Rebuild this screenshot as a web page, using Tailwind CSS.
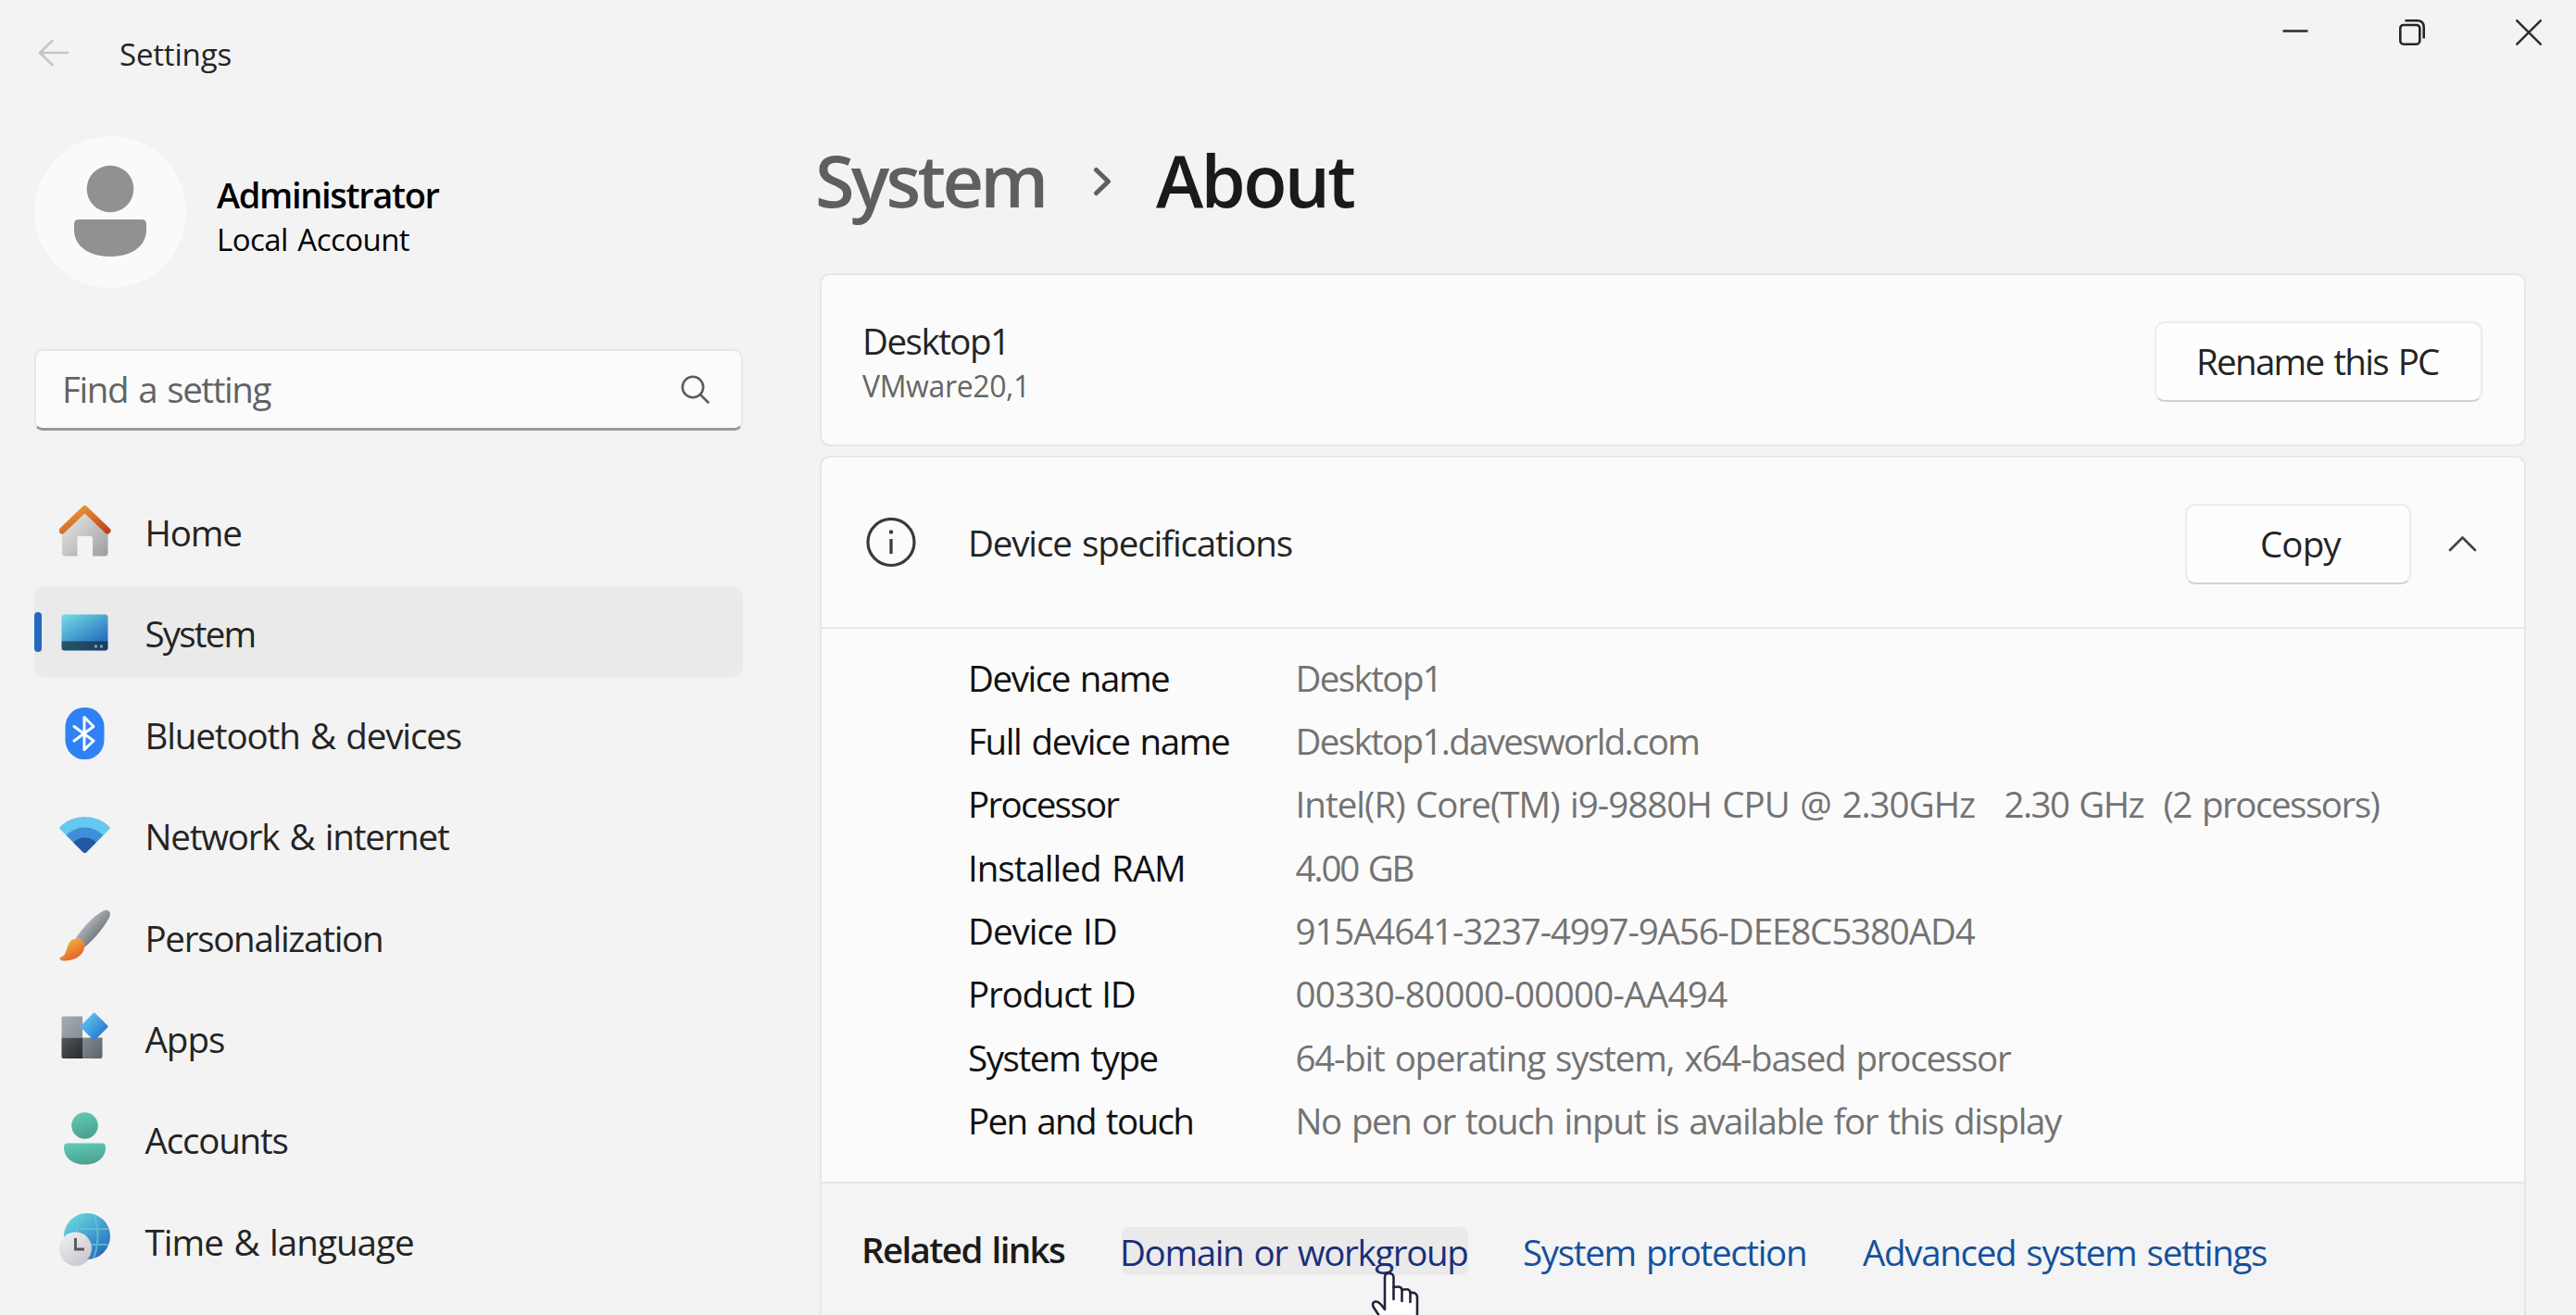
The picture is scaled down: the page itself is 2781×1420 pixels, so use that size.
<!DOCTYPE html>
<html lang="en">
<head>
<meta charset="utf-8">
<title>Settings</title>
<script src="https://cdn.jsdelivr.net/npm/@tailwindcss/browser@4"></script>
</head>
<body class="w-[2781px] h-[1420px] overflow-hidden flex bg-[#f3f3f3] text-[38.5px] text-[#242424] whitespace-nowrap [word-spacing:2.5px] font-['Open_Sans','Noto_Sans',sans-serif]">

<!-- Sidebar -->
<aside class="w-[885px] shrink-0 pl-[37px] pr-[83px] flex flex-col">
  <header class="h-[113px] flex items-center">
    <svg class="w-[34px] h-[30px] ml-[4px]" viewBox="0 0 34 30" fill="none" stroke="#c6c6c6" stroke-width="2.6" stroke-linecap="round" stroke-linejoin="round"><path d="M15.500 2 2 15 15.500 28M2.500 15H32"/></svg>
    <span class="ml-[54px] pt-[5px] text-[33px] tracking-[-0.18px]">Settings</span>
  </header>

  <div class="mt-[33px] h-[166px] flex items-center">
    <svg class="w-[164px] h-[164px]" viewBox="0 1 164 164"><circle cx="82" cy="83" r="82" fill="#fafafa"/><circle cx="82" cy="58" r="25.300" fill="#919191"/><path d="M48 91H116Q121 91 121 96V102C121 120 105 131 82 131S43 120 43 102V96Q43 91 48 91Z" fill="#919191"/></svg>
    <div class="ml-[33px] pt-[11px] text-black">
      <div class="text-[38px] leading-[48px] font-semibold tracking-[-1.34px]">Administrator</div>
      <div class="text-[33px] leading-[49px] tracking-[-0.55px]">Local Account</div>
    </div>
  </div>

  <div class="mt-[65px] h-[88px] shrink-0 rounded-[9px] border-2 border-[#e8e8e8] border-b-[3px] border-b-[#989898] bg-[#fbfbfb] flex items-center justify-between pl-[28px] pr-[33px] text-[#636363]">
    <span class="pt-[1px] tracking-[-1.42px]">Find a setting</span>
    <svg class="w-[32px] h-[32px]" viewBox="0 0 32 32" fill="none" stroke="#5c5c5c" stroke-width="2.6" stroke-linecap="round"><circle cx="13" cy="13" r="11.200"/><path d="M21 21 29.500 29.500"/></svg>
  </div>

  <nav class="mt-[59px] flex flex-col gap-[11.35px]">
    <a class="h-[98px] shrink-0 flex items-center pl-[27px]">
      <svg class="w-[56px] h-[56px]" viewBox="0 0 56 56"><defs><linearGradient id="hb" x1="0" y1="0" x2="1" y2="1"><stop offset=".2" stop-color="#dedede"/><stop offset="1" stop-color="#9d9d9d"/></linearGradient><linearGradient id="hr" x1="0" y1="0" x2="1" y2="1"><stop stop-color="#eda23a"/><stop offset="1" stop-color="#c4421c"/></linearGradient></defs><path d="M3 25 28 6 52.500 25V52Q52.500 55.500 49 55.500H36V36Q36 34 34 34H21Q19.500 34 19.500 36V55.500H6.500Q3 55.500 3 52Z" fill="url(#hb)"/><path d="M3 28 27.500 4.500 52 28" fill="none" stroke="url(#hr)" stroke-width="7" stroke-linecap="round" stroke-linejoin="round"/></svg>
      <span class="ml-[36.5px] pt-[6px] tracking-[-1.16px]">Home</span>
    </a>
    <a class="relative h-[98px] shrink-0 flex items-center pl-[27px] rounded-[11px] bg-[#eaeaea]">
      <span class="absolute left-0 top-[28px] w-[8px] h-[43px] rounded-full bg-[#2468bd]"></span>
      <svg class="w-[56px] h-[56px]" viewBox="0 0 56 56"><defs><linearGradient id="sy" x1="0" y1="0" x2="1" y2="1"><stop stop-color="#75e2e6"/><stop offset="1" stop-color="#2266bd"/></linearGradient><linearGradient id="sb" x1="0" y1="0" x2="1" y2="0"><stop stop-color="#25576b"/><stop offset="1" stop-color="#163a63"/></linearGradient><clipPath id="sc"><rect x="2.500" y="9.500" width="50" height="39" rx="3"/></clipPath></defs><g clip-path="url(#sc)"><path d="M2 9H53V39H2Z" fill="url(#sy)"/><path d="M2 38.500H53V49H2Z" fill="url(#sb)"/></g><path d="M38 42.500h3v3h-3zM44 42.500h3v3h-3z" fill="#7fa0b8"/></svg>
      <span class="ml-[36.5px] pt-[6px] tracking-[-1.82px]">System</span>
    </a>
    <a class="h-[98px] shrink-0 flex items-center pl-[27px]">
      <svg class="w-[56px] h-[56px]" viewBox="0 0 56 56"><rect x="6.500" y="0" width="42" height="56" rx="20" ry="21" fill="#2f82f5"/><path d="M16 20.500 37 36 27 45.500V10.500L37 20.500 16 36" fill="none" stroke="#fff" stroke-width="3" stroke-linejoin="round" stroke-linecap="round"/></svg>
      <span class="ml-[36.5px] pt-[6px] tracking-[-1.12px]">Bluetooth &amp; devices</span>
    </a>
    <a class="h-[98px] shrink-0 flex items-center pl-[27px]">
      <svg class="w-[56px] h-[56px]" viewBox="0 0 56 56"><defs><clipPath id="wf"><path d="M1.500 19.500Q-.5 21 1.500 23L25.500 47Q27.500 49 29.500 47L53.500 23Q55.500 21 53.500 19.500V5H1.500Z"/></clipPath></defs><g clip-path="url(#wf)"><circle cx="27.500" cy="48.500" r="39.500" fill="#66c7ef"/><circle cx="27.500" cy="48.500" r="28" fill="#3f8fd8"/><circle cx="27.500" cy="48.500" r="17" fill="#2458a3"/></g></svg>
      <span class="ml-[36.5px] pt-[6px] tracking-[-1.21px]">Network &amp; internet</span>
    </a>
    <a class="h-[98px] shrink-0 flex items-center pl-[27px]">
      <svg class="w-[56px] h-[56px]" viewBox="0 0 56 56"><defs><linearGradient id="ph" x1=".3" y1=".3" x2=".7" y2=".7"><stop stop-color="#b3b8be"/><stop offset="1" stop-color="#6c737b"/></linearGradient><linearGradient id="pb" x1=".2" y1="0" x2=".8" y2="1"><stop stop-color="#f9bd3c"/><stop offset="1" stop-color="#de5527"/></linearGradient></defs><path d="M18 31C25 20 36 8 47.500 1.500Q51 0 53.500 2T54 8.500C48 20 37 33 27 41Z" fill="url(#ph)"/><path d="M18 31.500C24 30.500 28.500 36 27 42C25 51 15 56 4 55.500Q0 54.500 .5 52C6 51 7 46 9 40C10.500 35 13 32.500 18 31.500Z" fill="url(#pb)"/></svg>
      <span class="ml-[36.5px] pt-[6px] tracking-[-1.29px]">Personalization</span>
    </a>
    <a class="h-[98px] shrink-0 flex items-center pl-[27px]">
      <svg class="w-[56px] h-[56px]" viewBox="0 0 56 56"><defs><linearGradient id="a1" x1="0" y1="0" x2="1" y2="1"><stop stop-color="#a6adb4"/><stop offset="1" stop-color="#868d95"/></linearGradient><linearGradient id="a2" x1="0" y1="0" x2="1" y2="1"><stop stop-color="#51585e"/><stop offset="1" stop-color="#272b2e"/></linearGradient><linearGradient id="a3" x1="0" y1="0" x2="1" y2="1"><stop stop-color="#848b92"/><stop offset="1" stop-color="#5c6369"/></linearGradient><linearGradient id="a4" x1="0" y1="0" x2="1" y2="1"><stop offset=".1" stop-color="#64c8f2"/><stop offset=".9" stop-color="#2270cf"/></linearGradient></defs><path d="M4.500 5.500H25V28.500H2.500V7.500Q2.500 5.500 4.500 5.500Z" fill="url(#a1)"/><path d="M2.500 28.500H25V51H4.500Q2.500 51 2.500 49Z" fill="url(#a2)"/><path d="M25 28.500H46.500V49Q46.500 51 44.500 51H25Z" fill="url(#a3)"/><path d="M36.500 2.200Q37.700 1 39 2.200L52 15.200Q53.200 16.500 52 17.800L39 30.800Q37.700 32 36.500 30.800L23.500 17.800Q22.300 16.500 23.500 15.200Z" fill="url(#a4)"/></svg>
      <span class="ml-[36.5px] pt-[6px] tracking-[-0.98px]">Apps</span>
    </a>
    <a class="h-[98px] shrink-0 flex items-center pl-[27px]">
      <svg class="w-[56px] h-[56px] overflow-visible" viewBox="0 0 56 56"><defs><linearGradient id="ac" x1=".3" y1="0" x2=".6" y2="1"><stop stop-color="#5fc9b4"/><stop offset="1" stop-color="#4b9f8f"/></linearGradient></defs><circle cx="27.500" cy="14.500" r="14.300" fill="url(#ac)"/><path d="M9 33.500H46Q50 33.500 50 38C50 49 41 56.500 27.500 56.500S5 49 5 38Q5 33.500 9 33.500Z" fill="url(#ac)"/></svg>
      <span class="ml-[36.5px] pt-[6px] tracking-[-1.19px]">Accounts</span>
    </a>
    <a class="h-[98px] shrink-0 flex items-center pl-[27px]">
      <svg class="w-[56px] h-[56px] overflow-visible" viewBox="0 0 56 56"><defs><linearGradient id="gl" x1=".1" y1="0" x2=".9" y2="1"><stop stop-color="#6be0e0"/><stop offset="1" stop-color="#2260b8"/></linearGradient><linearGradient id="ck" x1="0" y1="0" x2=".7" y2="1"><stop stop-color="#f2f2f4"/><stop offset="1" stop-color="#c9cacd"/></linearGradient></defs><circle cx="30" cy="25" r="25" fill="url(#gl)"/><path d="M7 17H53M7 34H53M23 1Q14 25 23 49M37 1Q46 25 37 49" fill="none" stroke="#62c3dd" stroke-width="2.200" opacity=".75"/><circle cx="18" cy="39.500" r="17.500" fill="#7d8a95" opacity=".35"/><circle cx="17.500" cy="38" r="17.500" fill="url(#ck)"/><path d="M17.500 27V39H27" fill="none" stroke="#565656" stroke-width="2.800"/></svg>
      <span class="ml-[36.5px] pt-[6px] tracking-[-0.95px]">Time &amp; language</span>
    </a>
  </nav>
</aside>

<!-- Content -->
<main class="w-[1896px] flex flex-col">
  <header class="h-[69px] shrink-0 flex items-center justify-end gap-[98px] pr-[37px]">
    <svg class="w-[28px] h-[28px]" viewBox="0 0 28 28" fill="none" stroke="#303030" stroke-width="2.600"><path d="M.5 12.500H27.500"/></svg>
    <svg class="w-[28px] h-[28px]" viewBox="0 0 28 28" fill="none" stroke="#262626" stroke-width="2.600"><rect x="1.300" y="6" width="21" height="20.700" rx="3.500"/><path d="M6.500 1.300H19.500Q26.700 1.300 26.700 8.500V20.500"/></svg>
    <svg class="w-[28px] h-[28px]" viewBox="0 0 28 28" fill="none" stroke="#303030" stroke-width="2.600" stroke-linecap="round"><path d="M1.300 1.300 26.700 26.700M26.700 1.300 1.300 26.700"/></svg>
  </header>

  <h1 class="h-[226px] shrink-0 -ml-[5px] pt-[25px] flex items-center text-[77.5px] font-semibold">
    <span class="w-[300px] text-[#5f5f5f] tracking-[-3.76px]">System</span>
    <svg class="w-[20px] h-[32px] mt-[3px] mr-[48px]" viewBox="0 0 20 32" fill="none" stroke="#5f5f5f" stroke-width="5" stroke-linecap="round" stroke-linejoin="round"><path d="M3.500 3.500 16.500 16 3.500 28.500"/></svg>
    <span class="text-[#1a1a1a] tracking-[-2.68px]">About</span>
  </h1>

  <section class="w-[1842px] h-[187px] shrink-0 rounded-[11px] border-2 border-[#e7e7e7] bg-[#fbfbfb] flex items-center justify-between pl-[44px] pr-[45px]">
    <div class="pt-[8px]">
      <div class="leading-[48.500px] tracking-[-1.5px]">Desktop1</div>
      <div class="text-[32px] leading-[48.500px] tracking-[-0.37px] text-[#666]">VMware20,1</div>
    </div>
    <button class="w-[354px] h-[87px] mt-[3px] pl-[43px] pt-[1px] text-left rounded-[11px] border-2 border-[#ececec] border-b-[#d2d2d2] bg-[#fefefe] tracking-[-1.70px] [word-spacing:2.5px]">Rename this PC</button>
  </section>

  <section class="w-[1842px] h-[940px] mt-[10px] shrink-0 rounded-t-[11px] border-2 border-b-0 border-[#e7e7e7] bg-[#fbfbfb] flex flex-col">
    <div class="h-[185px] shrink-0 border-b-2 border-[#e9e9e9] flex items-center pl-[48px] pr-[51px]">
      <svg class="w-[54px] h-[54px]" viewBox="0 0 54 54" fill="none" stroke="#3a3a3a" stroke-width="3.200"><circle cx="27" cy="26.500" r="25"/><path d="M27 23V39"/><circle cx="27" cy="15.500" r="2.200" fill="#3a3a3a" stroke="none"/></svg>
      <span class="ml-[56px] pt-[3px] grow tracking-[-1.14px]">Device specifications</span>
      <button class="w-[244px] h-[87px] mt-[3px] pl-[79px] pt-[1px] text-left rounded-[11px] border-2 border-[#ececec] border-b-[#d2d2d2] bg-[#fefefe] tracking-[-0.89px]">Copy</button>
      <svg class="w-[31px] h-[18px] ml-[40px] mt-[2px]" viewBox="0 0 31 18" fill="none" stroke="#444" stroke-width="2.800" stroke-linecap="round" stroke-linejoin="round"><path d="M2 16 15.500 2.500 29 16"/></svg>
    </div>

    <dl class="h-[599px] shrink-0 border-b-2 border-[#e6e6e6] pt-[18.5px] pl-[158px] grid grid-cols-[353.5px_1fr] auto-rows-[68.35px] content-start leading-[68.35px] text-[#111]">
      <dt class="tracking-[-1.46px]">Device name</dt><dd class="text-[#737373] tracking-[-1.6px]">Desktop1</dd>
      <dt class="tracking-[-1.38px]">Full device name</dt><dd class="text-[#737373] tracking-[-1.67px]">Desktop1.davesworld.com</dd>
      <dt class="tracking-[-1.70px]">Processor</dt><dd class="text-[#737373] flex"><span class="w-[765px] tracking-[-0.98px]">Intel(R) Core(TM) i9-9880H CPU @ 2.30GHz</span><span class="w-[172px] tracking-[-1.58px]">2.30 GHz</span><span class="tracking-[-1.48px]">(2 processors)</span></dd>
      <dt class="tracking-[-1.00px]">Installed RAM</dt><dd class="text-[#737373] tracking-[-2.1px]">4.00 GB</dd>
      <dt class="tracking-[-1.01px]">Device ID</dt><dd class="text-[#737373] tracking-[-1.13px]">915A4641-3237-4997-9A56-DEE8C5380AD4</dd>
      <dt class="tracking-[-1.21px]">Product ID</dt><dd class="text-[#737373] tracking-[-0.70px]">00330-80000-00000-AA494</dd>
      <dt class="tracking-[-1.42px]">System type</dt><dd class="text-[#737373] tracking-[-1.25px]">64-bit operating system, x64-based processor</dd>
      <dt class="tracking-[-1.64px]">Pen and touch</dt><dd class="text-[#737373] tracking-[-1.40px]">No pen or touch input is available for this display</dd>
    </dl>

    <div class="grow bg-[#f4f4f4] flex items-start pt-[47px] pl-[43px] leading-[54px] text-[#14519e]">
      <span class="w-[281px] -mt-[3px] font-semibold text-[#1b1b1b] tracking-[-1.64px]">Related links</span>
      <a class="relative w-[374px] h-[52px] -indent-[2px] rounded-[8px] bg-[#eaeaea] text-[#1a2f7a] tracking-[-1.36px]">Domain or workgroup
        <svg class="absolute left-[269px] top-[48px] w-[52px] h-[72px]" viewBox="0 0 52 72" fill="#fff" stroke="#23233a" stroke-width="2.600" stroke-linejoin="round" stroke-linecap="round"><path d="M15 38V6Q15 2 19.500 2T24.500 6V17Q33 15 33.500 20Q42 17.500 42.500 23Q50 22 50 28V48L44 60V71H20V62L9 48 2.500 38Q1 33 5 32.500 9 32 15 41Z"/><path d="M24.500 17V30M33.500 20V32M42.500 23V33" fill="none"/></svg>
      </a>
      <a class="ml-[59px] w-[367px] tracking-[-1.32px]">System protection</a>
      <a class="tracking-[-1.32px]">Advanced system settings</a>
    </div>
  </section>
</main>
</body>
</html>
